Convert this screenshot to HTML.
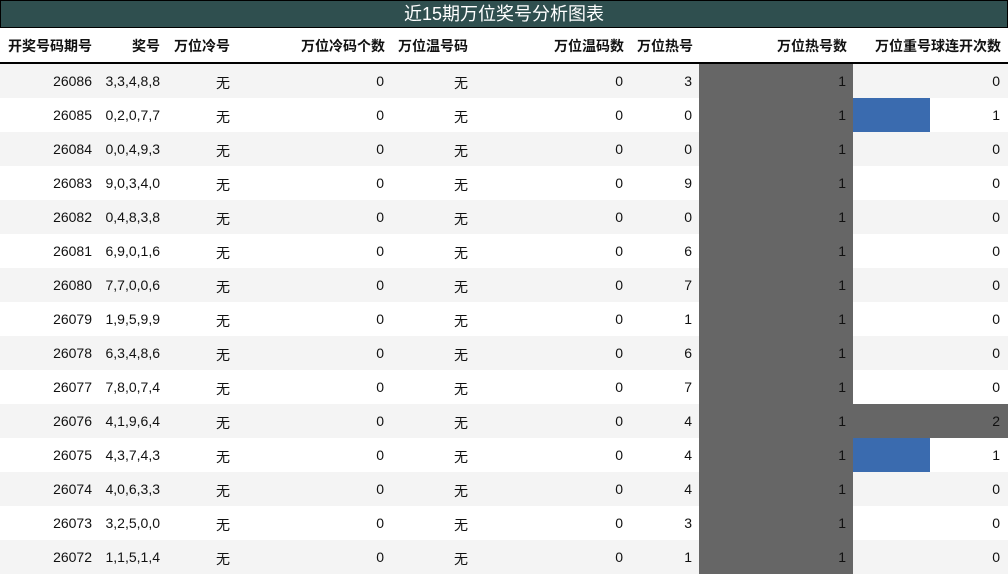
<!DOCTYPE html><html><head><meta charset="utf-8"><style>
body{margin:0;width:1008px;height:575px;background:#fff;font-family:"Liberation Sans","Noto Sans CJK SC",sans-serif;font-size:14px;color:#111;position:relative;overflow:hidden}
.t{position:absolute;left:0;top:0;width:1006px;height:26px;background:#2f4f4f;border:1px solid #000;color:#fff;font-size:18px;text-align:center;line-height:27px}
.h{position:absolute;top:28px;height:34px;line-height:36px;font-weight:bold;border-bottom:2px solid #000;width:1008px}
.r{position:absolute;left:0;width:1008px;height:34px;line-height:34px}
.c{position:absolute;top:0;height:100%;text-align:right}
.g{position:absolute;top:0;height:100%;background:#666}
.b{position:absolute;top:0;height:100%;background:#3a6baf}
</style></head><body>
<div class="t">近15期万位奖号分析图表</div>
<div class="h">
<span class="c" style="left:0;width:92px">开奖号码期号</span>
<span class="c" style="left:100px;width:60px">奖号</span>
<span class="c" style="left:166px;width:64px">万位冷号</span>
<span class="c" style="left:236px;width:149px">万位冷码个数</span>
<span class="c" style="left:390px;width:78px">万位温号码</span>
<span class="c" style="left:476px;width:148px">万位温码数</span>
<span class="c" style="left:630px;width:63px">万位热号</span>
<span class="c" style="left:700px;width:147px">万位热号数</span>
<span class="c" style="left:853px;width:148px">万位重号球连开次数</span>
</div>
<div id="rows"></div>
<script>
var d=[["26086","3,3,4,8,8",3,0],["26085","0,2,0,7,7",0,1],["26084","0,0,4,9,3",0,0],["26083","9,0,3,4,0",9,0],["26082","0,4,8,3,8",0,0],["26081","6,9,0,1,6",6,0],["26080","7,7,0,0,6",7,0],["26079","1,9,5,9,9",1,0],["26078","6,3,4,8,6",6,0],["26077","7,8,0,7,4",7,0],["26076","4,1,9,6,4",4,2],["26075","4,3,7,4,3",4,1],["26074","4,0,6,3,3",4,0],["26073","3,2,5,0,0",3,0],["26072","1,1,5,1,4",1,0]];
var h="";d.forEach(function(x,i){var y=64+i*34;var bg=i%2==0?"#f4f4f4":"#fff";
var last="";if(x[3]==2)last='<div class="g" style="left:853px;width:155px"></div>';else if(x[3]==1)last='<div class="b" style="left:853px;width:77px"></div>';
h+='<div class="r" style="top:'+y+'px;background:'+bg+'"><div class="g" style="left:699px;width:154px"></div>'+last+
'<span class="c" style="left:0;width:92px">'+x[0]+'</span><span class="c" style="left:100px;width:60px">'+x[1]+'</span><span class="c" style="left:166px;width:64px;top:2px">无</span><span class="c" style="left:236px;width:148px">0</span><span class="c" style="left:390px;width:78px;top:2px">无</span><span class="c" style="left:476px;width:147px">0</span><span class="c" style="left:630px;width:62px">'+x[2]+'</span><span class="c" style="left:700px;width:146px">1</span><span class="c" style="left:853px;width:147px">'+x[3]+'</span></div>';});
document.getElementById("rows").innerHTML=h;
</script>
</body></html>
